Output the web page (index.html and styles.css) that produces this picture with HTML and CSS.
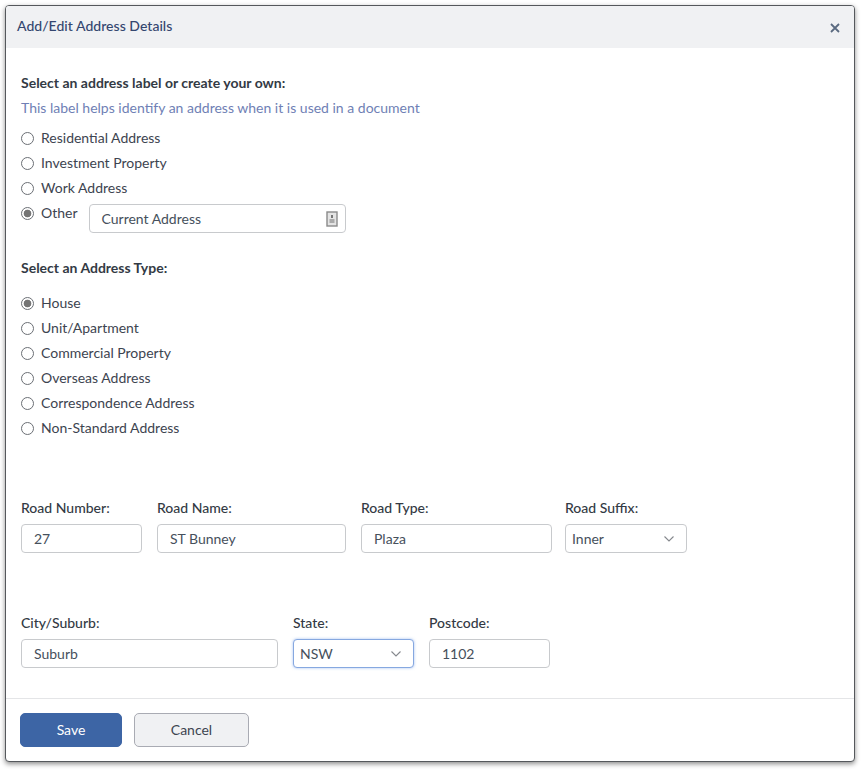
FILE: index.html
```html
<!DOCTYPE html>
<html lang="en">
<head>
<meta charset="utf-8">
<title>Add/Edit Address Details</title>
<link rel="stylesheet" href="styles.css">
</head>
<body>
<div class="modal">
  <header class="modal-head">
    <h1 class="modal-title">Add/Edit Address Details</h1>
    <svg class="close" width="10" height="10" viewBox="0 0 10 10" aria-label="Close"><path d="M1 1l8 8M9 1l-8 8"/></svg>
  </header>
  <div class="modal-body">
    <p class="heading">Select an address label or create your own:</p>
    <p class="hint">This label helps identify an address when it is used in a document</p>
    <div class="radios radios-label">
      <label class="radio"><input type="radio" name="l"><span>Residential Address</span></label>
      <label class="radio"><input type="radio" name="l"><span>Investment Property</span></label>
      <label class="radio"><input type="radio" name="l"><span>Work Address</span></label>
      <div class="other-row">
        <label class="radio"><input type="radio" name="l" checked><span>Other</span></label>
        <div class="field other-field">
          <span>Current Address</span>
          <svg class="contact" width="12" height="16" viewBox="0 0 12 16"><rect x="1" y="1" width="10" height="14" fill="#e4e4e4" stroke="#8a8a8a" stroke-width="1.4"/><rect x="5" y="4" width="2" height="3" fill="#777"/><rect x="3.500" y="8" width="5" height="4" fill="#aaa"/></svg>
        </div>
      </div>
    </div>
    <p class="heading type-heading">Select an Address Type:</p>
    <div class="radios radios-type">
      <label class="radio"><input type="radio" name="t" checked><span>House</span></label>
      <label class="radio"><input type="radio" name="t"><span>Unit/Apartment</span></label>
      <label class="radio"><input type="radio" name="t"><span>Commercial Property</span></label>
      <label class="radio"><input type="radio" name="t"><span>Overseas Address</span></label>
      <label class="radio"><input type="radio" name="t"><span>Correspondence Address</span></label>
      <label class="radio"><input type="radio" name="t"><span>Non-Standard Address</span></label>
    </div>
    <div class="form-row road-row">
      <div class="col w-number"><div class="col-label">Road Number:</div><div class="field"><span>27</span></div></div>
      <div class="col w-name"><div class="col-label">Road Name:</div><div class="field"><span>ST Bunney</span></div></div>
      <div class="col w-type"><div class="col-label">Road Type:</div><div class="field"><span>Plaza</span></div></div>
      <div class="col w-suffix"><div class="col-label">Road Suffix:</div><div class="field select"><span>Inner</span><svg class="chev" width="10" height="6" viewBox="0 0 10 6"><path d="M.5.5L5 5 9.500.5"/></svg></div></div>
    </div>
    <div class="form-row city-row">
      <div class="col w-city"><div class="col-label">City/Suburb:</div><div class="field"><span>Suburb</span></div></div>
      <div class="col w-state"><div class="col-label">State:</div><div class="field select focus"><span>NSW</span><svg class="chev" width="10" height="6" viewBox="0 0 10 6"><path d="M.5.5L5 5 9.500.5"/></svg></div></div>
      <div class="col w-post"><div class="col-label">Postcode:</div><div class="field"><span>1102</span></div></div>
    </div>
  </div>
  <footer class="modal-foot">
    <button class="btn btn-save" type="button">Save</button>
    <button class="btn btn-cancel" type="button">Cancel</button>
  </footer>
</div>
</body>
</html>
```
FILE: styles.css
```css
* { box-sizing: border-box; }
html, body { margin: 0; height: 100%; background: #fff; }
body {
  padding: 5px 0 0 5px;
  font-family: Lato, "Liberation Sans", sans-serif;
  font-size: 14px;
  line-height: 20px;
  color: #3d4450;
  overflow: hidden;
}
.modal {
  width: 850px;
  height: 757px;
  background: #fff;
  border: 1px solid #55585c;
  border-radius: 4px;
  box-shadow: 0 2px 5px rgba(0,0,0,.45);
  display: flex;
  flex-direction: column;
  overflow: hidden;
}
.modal-head {
  flex: none;
  height: 42px;
  background: #f0f1f3;
  display: flex;
  align-items: center;
  justify-content: space-between;
  padding: 0 14px 2px 11px;
}
.modal-title { margin: 0; font-size: 14px; font-weight: 500; color: #34466f; letter-spacing: .03px; }
.close { margin-top: 4px; }
.close path { stroke: #5a6a80; stroke-width: 1.800; fill: none; }
.modal-body { flex: 1; padding: 25px 15px 0; }
.heading { margin: 0; font-weight: 700; font-size: 14px; color: #333a44; }
.hint { margin: 5px 0 0; color: #6f7fb5; }
.radios { display: flex; flex-direction: column; gap: 5px; }
.radios-label { margin-top: 10px; }
.radios-type { margin-top: 15px; }
.type-heading { margin-top: 35px; }
.radio { display: flex; align-items: center; height: 20px; }
.radio input {
  appearance: none;
  width: 13px;
  height: 13px;
  margin: 0 7px 0 0;
  border: 1px solid #6b6f75;
  border-radius: 50%;
  background: #fff;
  flex: none;
}
.radio input:checked { background: radial-gradient(circle, #757575 0 3.500px, #fff 4.200px); }
.other-row { display: flex; align-items: flex-start; gap: 11px; height: 20px; }
.field {
  height: 29px;
  border: 1px solid #c8cacd;
  border-radius: 4px;
  background: #fff;
  display: flex;
  align-items: center;
  justify-content: space-between;
  padding: 0 12px;
  color: #46505c;
}
.other-field { width: 257px; margin-top: 1px; padding-right: 7px; }
.contact { display: block; }
.form-row { display: flex; }
.road-row { margin-top: 62px; }
.city-row { margin-top: 62px; }
.col-label { font-weight: 500; color: #333a44; height: 16px; line-height: 16px; margin-bottom: 8px; }
.w-number { width: 121px; margin-right: 15px; }
.w-name { width: 189px; margin-right: 15px; }
.w-type { width: 191px; margin-right: 13px; }
.w-suffix { width: 122px; }
.w-city { width: 257px; margin-right: 15px; }
.w-state { width: 121px; margin-right: 15px; }
.w-post { width: 121px; }
.select { padding: 0 12px 0 6px; }
.focus { border-color: #86a8e0; box-shadow: 0 0 3px rgba(90,140,230,.55); }
.chev path { stroke: #85888d; stroke-width: 1.100; fill: none; }
.modal-foot {
  flex: none;
  height: 63px;
  border-top: 1px solid #e4e5e7;
  padding: 14px 14px 0;
  display: flex;
  align-items: flex-start;
  gap: 12px;
}
.btn { height: 34px; border-radius: 5px; font: 14px/20px Lato, "Liberation Sans", sans-serif; padding: 0; }
.btn-save { width: 102px; background: #3d65a5; border: 1px solid #3d65a5; color: #fff; }
.btn-cancel { width: 115px; background: #f0f1f3; border: 1px solid #a9abb3; color: #3d4450; }
```
